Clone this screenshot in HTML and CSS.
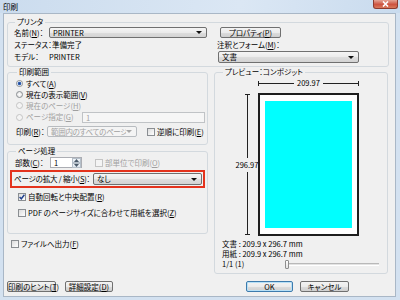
FILE: index.html
```html
<!DOCTYPE html>
<html lang="ja">
<head>
    <meta charset="UTF-8">
    <meta name="viewport" content="width=device-width, initial-scale=1.0">
    <title>印刷</title>
    <link rel="stylesheet" href="styles.css">
</head>
<body>
<div class="ventana">
    <div class="titulo">
        <span>印刷</span>
        <span class="cerrar">
            <svg width="9" height="6" viewBox="0 0 9 6"><path d="M2 0.5 L7 5.5 M7 0.5 L2 5.5" stroke="#fff" stroke-width="1.6"/></svg>
        </span>
    </div>

    <div class="cliente">
        <!-- Impresora -->
        <div class="grupo grupo-impresora">
            <div class="grupo-titulo">プリンタ</div>
            <div class="impresora">
                <div class="fila">
                    <span class="etq-nombre">名前(<u>N</u>)：</span>
                    <div class="combo combo-impresora"><span>PRINTER</span><i class="flecha"></i></div>
                </div>
                <div class="fila">
                    <button class="boton boton-prop">プロパティ(<u>P</u>)</button>
                </div>
                <div class="fila">ステータス：準備完了</div>
                <div class="fila etq-anot">注釈とフォーム(<u>M</u>)：</div>
                <div class="fila">
                    <span class="etq-nombre">モデル：</span>PRINTER
                </div>
                <div class="fila">
                    <div class="combo combo-doc"><span>文書</span><i class="flecha"></i></div>
                </div>
            </div>
        </div>

        <div class="columnas">
            <div class="col-izq">
                <!-- Rango de impresion -->
                <div class="grupo grupo-rango">
                    <div class="grupo-titulo">印刷範囲</div>
                    <div class="fila-radio primera">
                        <i class="radio marcado"></i>すべて(<u>A</u>)
                    </div>
                    <div class="fila-radio">
                        <i class="radio"></i>現在の表示範囲(<u>V</u>)
                    </div>
                    <div class="fila-radio inactivo">
                        <i class="radio"></i>現在のページ(<u>H</u>)
                    </div>
                    <div class="fila-radio fila-paginas inactivo">
                        <i class="radio"></i><span class="etq-paginas">ページ指定(<u>G</u>)</span>
                        <div class="texto-paginas">1</div>
                    </div>
                    <div class="fila-imprimir">
                        <span class="etq-imprimir">印刷(<u>R</u>)：</span>
                        <div class="combo combo-inactivo combo-rango"><span>範囲内のすべてのページ</span><i class="flecha"></i></div>
                        <i class="casilla casilla-inversa"></i>逆順に印刷(<u>E</u>)
                    </div>
                </div>

                <!-- Manejo de paginas -->
                <div class="grupo grupo-paginas">
                    <div class="grupo-titulo">ページ処理</div>
                    <div class="fila-copias">
                        <span class="etq-copias">部数(<u>C</u>)：</span>
                        <div class="giro">
                            <span>1</span>
                            <div class="giro-botones">
                                <div class="giro-btn"><svg width="5" height="3" viewBox="0 0 5 3"><path d="M0 3 L2.5 0 L5 3Z" fill="#4a5a6a"/></svg></div>
                                <div class="giro-btn"><svg width="5" height="3" viewBox="0 0 5 3"><path d="M0 0 L2.5 3 L5 0Z" fill="#4a5a6a"/></svg></div>
                            </div>
                        </div>
                        <i class="casilla casilla-inactiva"></i><span class="inactivo">部単位で印刷(<u>O</u>)</span>
                    </div>
                    <div class="fila-escala">
                        <span class="etq-escala">ページの拡大 / 縮小(<u>S</u>)：</span>
                        <div class="combo combo-escala"><span>なし</span><i class="flecha"></i></div>
                    </div>
                    <div class="fila-casilla fila-rotar">
                        <i class="casilla marcada">
                            <svg width="6" height="6" viewBox="0 0 6 6"><path d="M0.6 3 L2.3 4.8 L5.4 0.8" stroke="#21418f" stroke-width="1.4" fill="none"/></svg>
                        </i>自動回転と中央配置(<u>R</u>)
                    </div>
                    <div class="fila-casilla fila-pdf">
                        <i class="casilla"></i>PDF のページサイズに合わせて用紙を選択(<u>Z</u>)
                    </div>
                </div>

                <div class="fila-casilla fila-archivo">
                    <i class="casilla"></i>ファイルへ出力(<u>F</u>)
                </div>
            </div>

            <!-- Vista previa -->
            <div class="grupo grupo-vista">
                <div class="grupo-titulo">プレビュー：コンポジット</div>
                <div class="cotas">
                    <div></div>
                    <div class="cota-h">
                        <i class="marca-v"></i><i class="linea-h"></i><span>209.97</span><i class="linea-h"></i><i class="marca-v"></i>
                    </div>
                    <div class="cota-v">
                        <i class="marca-h"></i><i class="linea-v"></i><span>296.97</span><i class="linea-v"></i><i class="marca-h"></i>
                    </div>
                    <div class="hoja">
                        <div class="hoja-area"></div>
                    </div>
                </div>
                <div class="info-linea primera">文書 : 209.9 x 296.7 mm</div>
                <div class="info-linea">用紙 : 209.9 x 296.7 mm</div>
                <div class="info-linea fila-deslizador">
                    <span class="etq-pagina">1/1 (1)</span>
                    <i class="deslizador-mando"></i><i class="deslizador-pista"></i>
                </div>
            </div>
        </div>

        <div class="botones">
            <button class="boton boton-consejos">印刷のヒント(<u>T</u>)</button>
            <button class="boton boton-avanzado">詳細設定(<u>D</u>)</button>
            <button class="boton boton-ok">OK</button>
            <button class="boton boton-cancelar">キャンセル</button>
        </div>
    </div>
</div>
</body>
</html>
```

FILE: styles.css
```css
* {
    box-sizing: border-box;
}
body {
    margin: 0;
    font-family: "Noto Sans CJK JP", "Noto Sans", sans-serif;
    font-size: 7.5px;
    line-height: 10px;
    font-feature-settings: "palt";
    white-space: nowrap;
    color: #000;
    background: #fff;
}
u {
    text-decoration: underline;
}
i {
    display: block;
    flex: none;
}
.ventana {
    width: 400px;
    height: 300px;
    background: #d3e1f0;
    display: flex;
    flex-direction: column;
}
.titulo {
    height: 13px;
    position: relative;
    padding: 1px 0 0 3px;
    line-height: 11px;
    background: linear-gradient(100deg, #cbdcee, #dbe7f4 60%, #c9dbee);
}
.cerrar {
    position: absolute;
    right: 2px;
    top: 0;
    width: 25px;
    height: 9px;
    display: flex;
    align-items: center;
    justify-content: center;
    border: 1px solid #8d3b2f;
    border-top: none;
    border-radius: 0 0 3px 3px;
    background: linear-gradient(#e4a596, #cd5340 55%, #d97a5c);
}
.cliente {
    flex: 1;
    margin: 0 4px 3px 3px;
    padding: 0 3px;
    background: #f0f0f0;
    border: 1px solid #a9b7c6;
    display: flex;
    flex-direction: column;
}

/* grupos */
.grupo {
    border: 1px solid #d3d9de;
    border-radius: 3px;
}
.grupo-titulo {
    width: fit-content;
    margin: -6px 0 0 1px;
    padding: 0 2px;
    background: #f0f0f0;
}
.grupo-impresora {
    margin: 8px 3px 0 0;
    padding: 0 0 3px 6px;
}
.impresora {
    display: grid;
    grid-template-columns: 193px 142px;
    grid-template-rows: 11px 13px 12px;
    column-gap: 10px;
}
.fila {
    display: flex;
    align-items: center;
}
.etq-nombre {
    width: 35px;
}
.combo {
    display: flex;
    align-items: center;
    height: 11px;
    padding-left: 3px;
    border: 1px solid #707070;
    border-radius: 2px;
    background: linear-gradient(#f5f5f5, #ebebeb 50%, #dedede 50%, #d3d3d3);
    overflow: hidden;
}
.combo span {
    flex: 1;
    overflow: hidden;
}
.flecha {
    width: 0;
    height: 0;
    margin-right: 4px;
    border-left: 3px solid transparent;
    border-right: 3px solid transparent;
    border-top: 3px solid #111;
}
.combo-impresora {
    width: 158px;
}
.combo-doc {
    width: 141px;
    height: 12px;
    margin-left: 1px;
}
.combo-inactivo {
    color: #a0a0a0;
    border-color: #b8bcc0;
    background: #f4f4f4;
}
.combo-inactivo .flecha {
    border-top-color: #a8a8a8;
}
.boton {
    height: 11px;
    padding: 0;
    font: inherit;
    line-height: 9px;
    white-space: nowrap;
    color: #000;
    border: 1px solid #707070;
    border-radius: 2px;
    background: linear-gradient(#f3f3f3, #ebebeb 50%, #dddddd 50%, #cfcfcf);
}
.boton-prop {
    width: 61px;
    margin-left: 3px;
}

.columnas {
    display: flex;
    gap: 6px;
    margin-top: 5px;
}
.col-izq {
    width: 201px;
}

/* rango */
.grupo-rango {
    padding: 0 2px 7px 8px;
}
.fila-radio {
    display: flex;
    align-items: center;
    height: 11px;
}
.fila-radio.primera {
    margin-top: 1px;
}
.radio {
    width: 7px;
    height: 7px;
    margin-right: 3px;
    border: 1px solid #8a8e92;
    border-radius: 50%;
    background: radial-gradient(#ffffff, #dcdcdc);
}
.radio.marcado {
    background: radial-gradient(circle, #1d3f8a 0, #3d6fc0 1.6px, #ffffff 2.2px, #e0e0e0);
}
.inactivo {
    color: #a0a0a0;
}
.inactivo .radio {
    border-color: #c4c4c4;
    background: #f4f4f4;
}
.fila-paginas {
    height: 12px;
}
.etq-paginas {
    width: 56px;
}
.texto-paginas {
    width: 123px;
    height: 11px;
    padding-left: 3px;
    border: 1px solid #c0c3c6;
    background: #f6f6f6;
    line-height: 9px;
}
.fila-imprimir {
    display: flex;
    align-items: center;
    height: 11px;
    margin-top: 3px;
}
.etq-imprimir {
    width: 31px;
}
.combo-rango {
    width: 90px;
    letter-spacing: -0.3px;
}
.casilla {
    width: 8px;
    height: 8px;
    margin-right: 2px;
    border: 1px solid #8a8e92;
    background: linear-gradient(135deg, #dcdcdc, #ffffff);
    display: flex;
    align-items: center;
    justify-content: center;
}
.casilla-inversa {
    margin-left: 10px;
}
.casilla-inactiva {
    margin-left: 13px;
    border-color: #c4c4c4;
    background: #f4f4f4;
}

/* paginas */
.grupo-paginas {
    margin-top: 6px;
    padding: 0 2px 15px 7px;
}
.fila-copias {
    display: flex;
    align-items: center;
    height: 11px;
    margin-top: 1px;
}
.etq-copias {
    width: 35px;
}
.giro {
    display: flex;
    align-items: center;
    width: 32px;
    height: 11px;
    padding-left: 3px;
    border: 1px solid #abadb3;
    background: #fff;
}
.giro span {
    flex: 1;
}
.giro-botones {
    width: 9px;
    height: 9px;
    display: flex;
    flex-direction: column;
}
.giro-btn {
    flex: 1;
    display: flex;
    align-items: center;
    justify-content: center;
    border: 1px solid #b5bfc9;
    background: linear-gradient(#f4f7fa, #dde5ee);
}
.fila-escala {
    display: flex;
    align-items: center;
    width: 195px;
    height: 18px;
    margin: 2px 0 0 -5px;
    padding: 0 1px 0 2px;
    border: 2px solid #e4331d;
}
.etq-escala {
    margin-right: 3px;
    letter-spacing: -0.2px;
}
.combo-escala {
    flex: 1;
    height: 12px;
}
.fila-casilla {
    display: flex;
    align-items: center;
    height: 10px;
}
.fila-rotar {
    margin: 4px 0 0 3px;
}
.fila-pdf {
    margin: 6px 0 0 3px;
}
.fila-archivo {
    margin: 5px 0 0 4px;
}

/* vista previa */
.grupo-vista {
    width: 174px;
    padding: 0 8px 4px 7px;
}
.cotas {
    display: grid;
    grid-template-columns: 22px 101px;
    grid-template-rows: 12px 143px;
    row-gap: 4px;
    margin-left: 14px;
}
.cota-h {
    display: flex;
    align-items: center;
}
.cota-h span {
    padding: 0 3px;
}
.cota-v span {
    padding: 2px 0;
}
.marca-v {
    width: 1px;
    height: 5px;
    background: #222;
}
.linea-h {
    flex: 1;
    height: 1px;
    background: #222;
}
.cota-v {
    display: flex;
    flex-direction: column;
    align-items: center;
    padding: 1px 0;
}
.marca-h {
    width: 5px;
    height: 1px;
    background: #222;
}
.linea-v {
    flex: 1;
    width: 1px;
    background: #222;
}
.hoja {
    border: 2px solid #1e1e1e;
    background: #fff;
    padding: 6px 5px;
}
.hoja-area {
    height: 100%;
    background: #00ffff;
}
.info-linea {
    height: 10px;
}
.info-linea.primera {
    margin-top: 3px;
}
.fila-deslizador {
    display: flex;
    align-items: center;
}
.etq-pagina {
    width: 63px;
}
.deslizador-mando {
    width: 4px;
    height: 9px;
    border: 1px solid #8e8e8e;
    border-radius: 1px;
    background: linear-gradient(#ffffff, #e2e2e2);
}
.deslizador-pista {
    flex: 1;
    height: 3px;
    border-top: 1px solid #b9b9b9;
    border-bottom: 1px solid #ffffff;
    background: #e3e3e3;
}

/* botones inferiores */
.botones {
    display: flex;
    margin-top: 7px;
}
.boton-consejos {
    width: 49px;
}
.boton-avanzado {
    width: 48px;
    margin-left: 9px;
}
.boton-ok {
    width: 47px;
    margin-left: auto;
    border-color: #3d7bad;
    box-shadow: inset 0 0 0 1px #b8e0f6;
}
.boton-cancelar {
    width: 49px;
    margin: 0 43px 0 7px;
}
```
